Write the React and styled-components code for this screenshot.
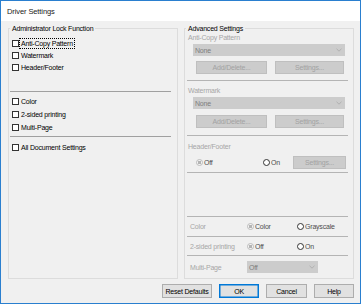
import styled, { createGlobalStyle } from "styled-components";

const GlobalStyle = createGlobalStyle`
	html, body {
		margin: 0;
		background: #ffffff;
	}
	* {
		box-sizing: border-box;
	}
`;

const leftGroups = [
	[
		{ label: 'Anti-Copy Pattern', focused: true },
		{ label: 'Watermark' },
		{ label: 'Header/Footer' },
	],
	[
		{ label: 'Color' },
		{ label: '2-sided printing' },
		{ label: 'Multi-Page' },
	],
];

const Chevron = () => (
	<svg width="6" height="4" viewBox="0 0 6 4">
		<path d="M0.5 0.8 L3 3.2 L5.5 0.8" fill="none" stroke="#a8a8a8" strokeWidth="0.8" />
	</svg>
);

const Check = ({ label, focused }) => (
	<CheckRow>
		<CheckBox />
		<CheckLabel $focused={focused}>{label}</CheckLabel>
	</CheckRow>
);

const Radio = ({ label, checked, width }) => (
	<RadioItem $width={width}>
		<RadioCircle $checked={checked} />
		<span>{label}</span>
	</RadioItem>
);

const DropDown = ({ value, width, left }) => (
	<Select $width={width} $left={left}>
		<span>{value}</span>
		<Chevron />
	</Select>
);

const App = () => {
	return (
		<>
			<GlobalStyle />
			<Window>
				<TitleBar>Driver Settings</TitleBar>
				<Body>
					<Columns>
						<GroupBox>
							<Legend>Administrator Lock Function</Legend>
							<LeftContent>
								<CheckGroup $rowHeight={12} $top={4}>
									{leftGroups[0].map(item => (
										<Check key={item.label} {...item} />
									))}
								</CheckGroup>
								<Separator $top={18} $dark />
								<CheckGroup $rowHeight={13} $top={3}>
									{leftGroups[1].map(item => (
										<Check key={item.label} {...item} />
									))}
								</CheckGroup>
								<Separator $top={2} $dark />
								<CheckGroup $rowHeight={13} $top={4}>
									<Check label="All Document Settings" />
								</CheckGroup>
							</LeftContent>
						</GroupBox>

						<GroupBox>
							<Legend>Advanced Settings</Legend>
							<RightContent>
								<FieldLabel>Anti-Copy Pattern</FieldLabel>
								<DropDown value="None" width={152} left={8} />
								<ButtonRow $top={5}>
									<DisabledButton $width={71}>Add/Delete...</DisabledButton>
									<DisabledButton $width={69}>Settings...</DisabledButton>
								</ButtonRow>
								<Separator $top={6} />

								<FieldLabel $top={5}>Watermark</FieldLabel>
								<DropDown value="None" width={152} left={8} />
								<ButtonRow $top={6}>
									<DisabledButton $width={71}>Add/Delete...</DisabledButton>
									<DisabledButton $width={69}>Settings...</DisabledButton>
								</ButtonRow>
								<Separator $top={7} />

								<FieldLabel $top={6}>Header/Footer</FieldLabel>
								<RadioRow>
									<Radio label="Off" checked width={67} />
									<Radio label="On" width={30} />
									<DisabledButton $width={53}>Settings...</DisabledButton>
								</RadioRow>
								<Separator $top={4} />

								<Separator $top={43} />
								<OptionRow $height={19}>
									<span>Color</span>
									<Radio label="Color" checked />
									<Radio label="Grayscale" />
								</OptionRow>
								<Separator />
								<OptionRow $height={18}>
									<span>2-sided printing</span>
									<Radio label="Off" checked />
									<Radio label="On" />
								</OptionRow>
								<Separator />
								<OptionRow $height={12} $top={5}>
									<span>Multi-Page</span>
									<DropDown value="Off" width={71} left={0} />
								</OptionRow>
							</RightContent>
						</GroupBox>
					</Columns>

					<Footer>
						<DialogButton $width={50}>Reset Defaults</DialogButton>
						<DialogButton $width={40} $default>OK</DialogButton>
						<DialogButton $width={41}>Cancel</DialogButton>
						<DialogButton $width={40}>Help</DialogButton>
					</Footer>
				</Body>
			</Window>
		</>
	);
};

const Window = styled.div`
	width: 361px;
	height: 304px;
	border: 1px solid #2a7fcf;
	background: #f0f0f0;
	display: flex;
	flex-direction: column;
	font-family: "Liberation Sans", Arial, sans-serif;
	font-size: 7px;
	line-height: 9px;
	letter-spacing: -0.2px;
	color: #000000;
`;

const TitleBar = styled.div`
	height: 20px;
	background: #ffffff;
	display: flex;
	align-items: center;
	padding-left: 6px;
	font-size: 7.5px;
	letter-spacing: -0.1px;
	color: #1a1a1a;
`;

const Body = styled.div`
	flex: 1;
	display: flex;
	flex-direction: column;
	gap: 5px;
	padding: 3px 6px 5px 7px;
`;

const Columns = styled.div`
	flex: 1;
	display: flex;
	gap: 6px;
`;

const GroupBox = styled.fieldset`
	width: 170px;
	margin: 0;
	padding: 0;
	min-width: 0;
	border: 1px solid #dcdcdc;
`;

const Legend = styled.legend`
	margin-left: 1px;
	padding: 0 2px;
	font-size: 7px;
	line-height: 9px;
	color: #000000;
`;

const LeftContent = styled.div`
	display: flex;
	flex-direction: column;
`;

const CheckGroup = styled.div`
	display: flex;
	flex-direction: column;
	margin-top: ${props => props.$top || 0}px;
	padding-left: 3px;
	& > div {
		height: ${props => props.$rowHeight}px;
	}
`;

const CheckRow = styled.div`
	display: flex;
	align-items: center;
`;

const CheckBox = styled.span`
	width: 7px;
	height: 7px;
	border: 1px solid #333333;
	background: #ffffff;
	flex-shrink: 0;
`;

const CheckLabel = styled.span`
	margin-left: 1px;
	padding: 0 1px;
	outline: ${props => props.$focused ? '1px dotted #000000' : 'none'};
`;

const Separator = styled.div`
	height: 1px;
	margin: ${props => props.$top || 0}px ${props => props.$dark ? 6 : 5}px 0 ${props => props.$dark ? 1 : 2}px;
	background: ${props => props.$dark ? '#a0a0a0' : '#b4b4b4'};
`;

const RightContent = styled.div`
	display: flex;
	flex-direction: column;
	color: #a6a6a6;
`;

const FieldLabel = styled.div`
	height: 9px;
	padding-left: 3px;
	margin-top: ${props => props.$top || 0}px;
	margin-bottom: 2px;
`;

const Select = styled.div`
	width: ${props => props.$width}px;
	height: 12px;
	margin-left: ${props => props.$left}px;
	padding: 0 3px 0 2px;
	background: #cccccc;
	color: #7d7d7d;
	display: flex;
	align-items: center;
	justify-content: space-between;
`;

const ButtonRow = styled.div`
	display: flex;
	gap: 8px;
	margin: ${props => props.$top}px 0 0 11px;
`;

const DisabledButton = styled.div`
	width: ${props => props.$width}px;
	height: 13px;
	background: #cccccc;
	border: 1px solid #bfbfbf;
	color: #a2a2a2;
	display: flex;
	align-items: center;
	justify-content: center;
`;

const RadioRow = styled.div`
	height: 13px;
	margin-top: 2px;
	padding-left: 11px;
	display: flex;
	align-items: center;
	& > div {
		margin-top: 2px;
	}
`;

const RadioItem = styled.div`
	display: flex;
	align-items: center;
	gap: 1px;
	color: #4d4d4d;
	width: ${props => props.$width ? `${props.$width}px` : 'auto'};
	flex-shrink: 0;
`;

const RadioCircle = styled.span`
	width: 7px;
	height: 7px;
	border-radius: 50%;
	border: 1px solid ${props => props.$checked ? '#bcbcbc' : '#333333'};
	background: ${props => props.$checked
		? 'radial-gradient(circle, #b4b4b4 0 1.6px, #f4f4f4 2px)'
		: '#ffffff'};
	flex-shrink: 0;
`;

const OptionRow = styled.div`
	height: ${props => props.$height}px;
	margin-top: ${props => props.$top || 0}px;
	padding-left: 5px;
	display: grid;
	grid-template-columns: 55px 52px 1fr;
	align-items: center;
	& > div:nth-child(2) {
		margin-left: 2px;
	}
`;

const Footer = styled.div`
	height: 14px;
	display: flex;
	justify-content: flex-end;
	gap: 7px;
`;

const DialogButton = styled.div`
	width: ${props => props.$width}px;
	height: 14px;
	background: #e1e1e1;
	border: 1px solid ${props => props.$default ? '#0078d7' : '#adadad'};
	box-shadow: ${props => props.$default ? 'inset 0 0 0 0.5px #0078d7' : 'none'};
	display: flex;
	align-items: center;
	justify-content: center;
`;

export default App;
